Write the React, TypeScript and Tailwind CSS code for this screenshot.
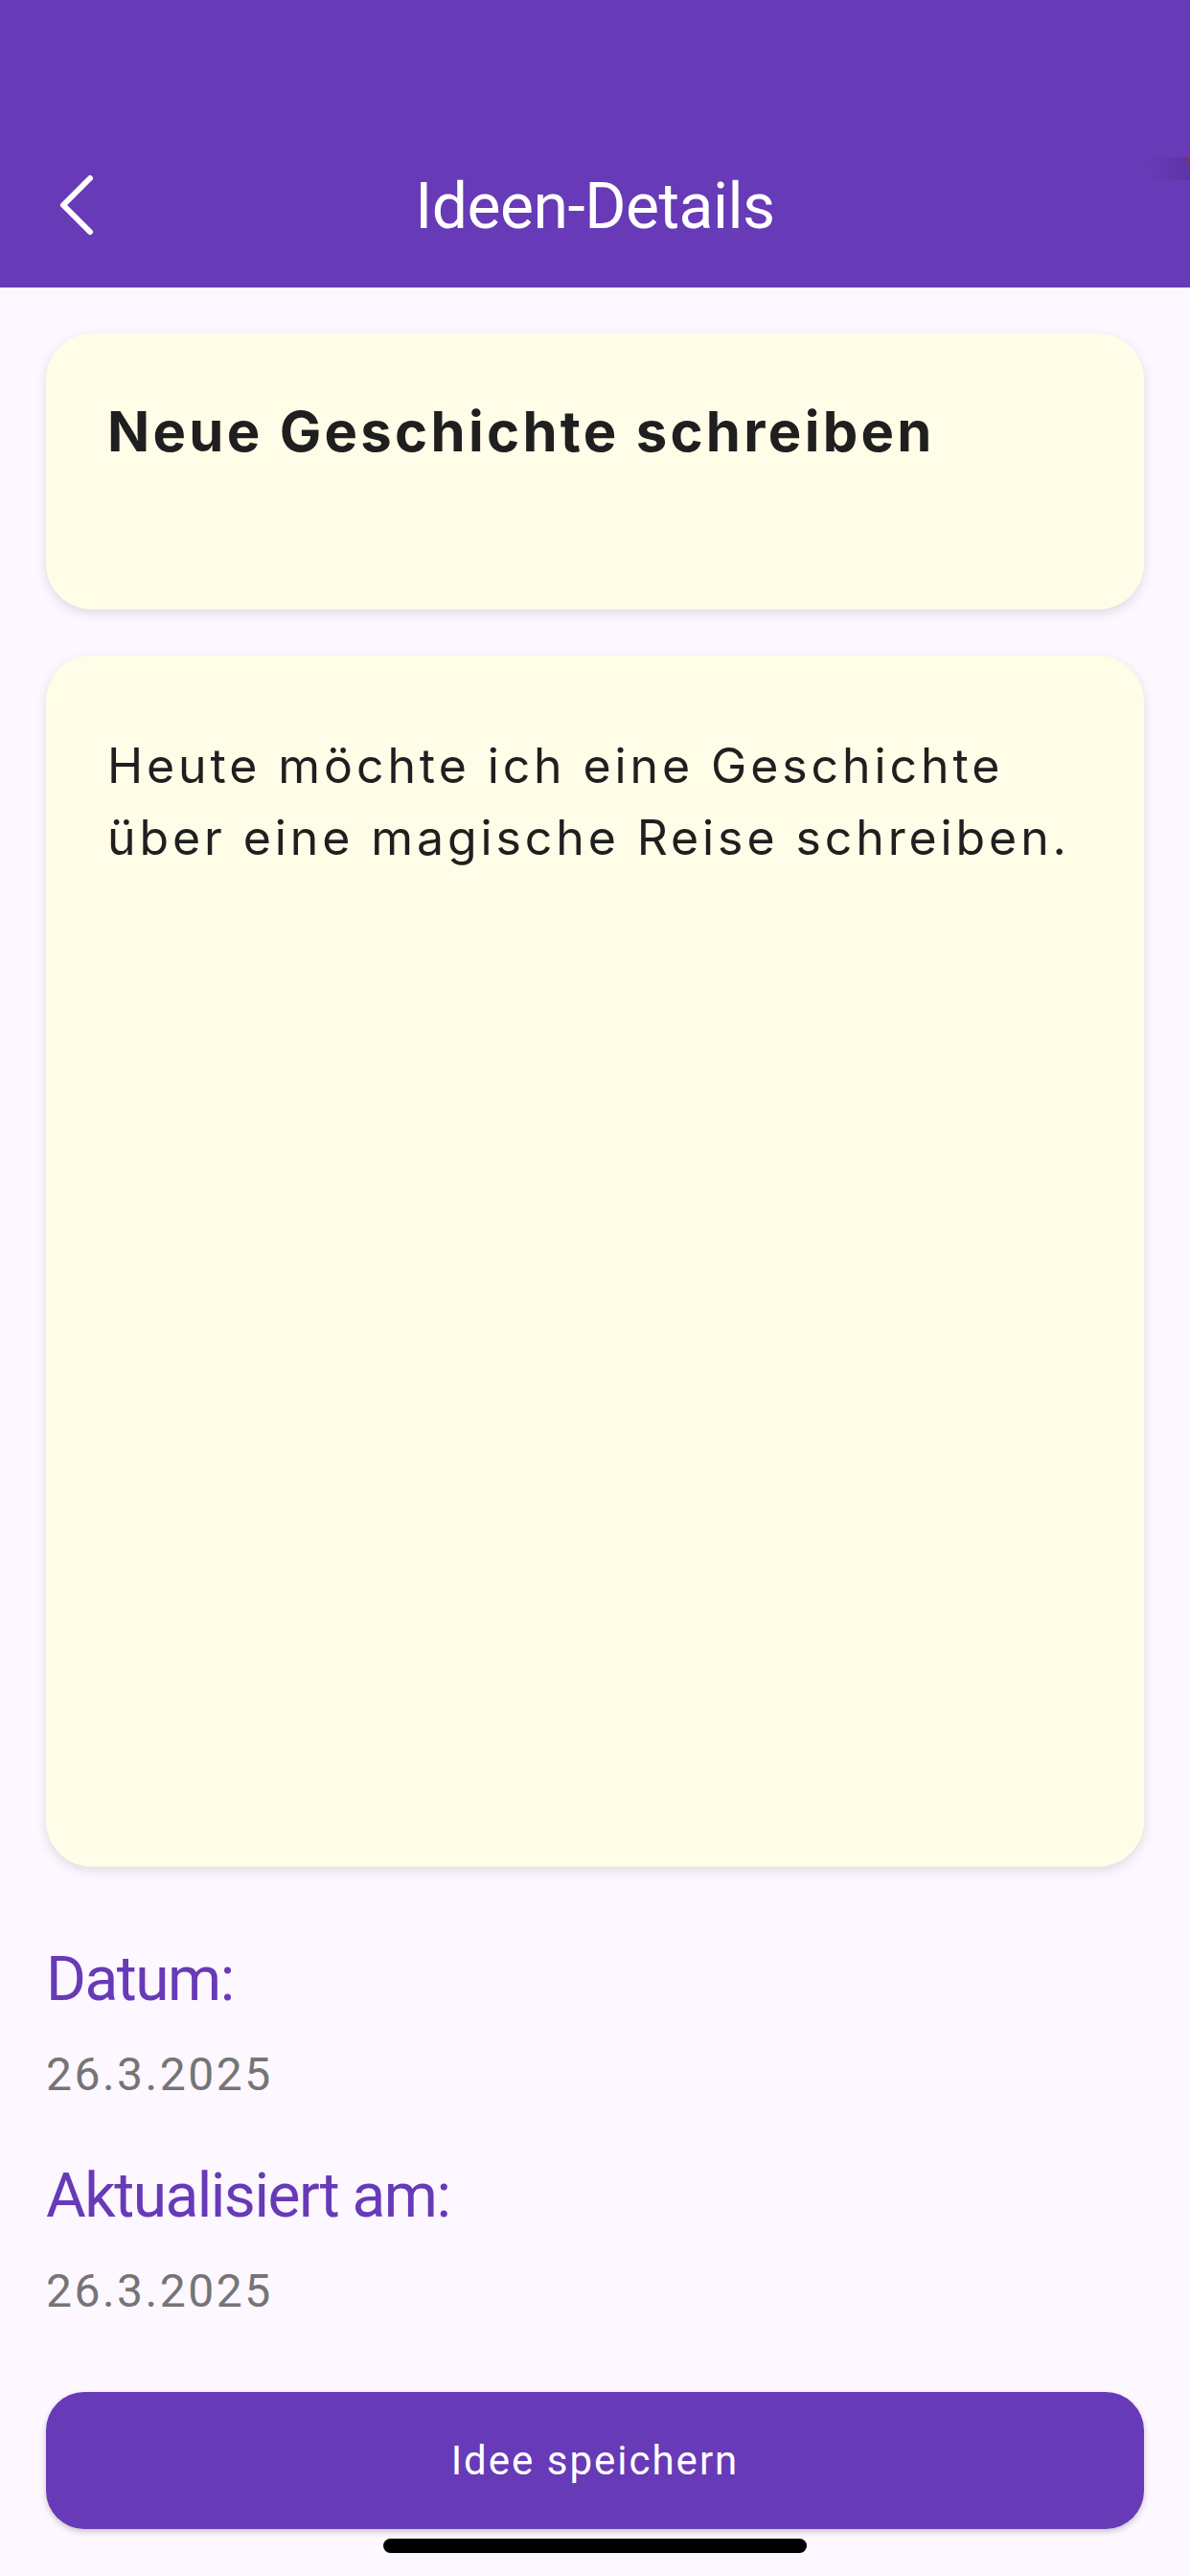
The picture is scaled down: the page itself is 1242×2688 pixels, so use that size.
import React from "react";

// Idea detail screen
const BackChevron: React.FC = () => (
  <svg width="48" height="72" viewBox="0 0 48 72" fill="none">
    <path
      d="M38 8 L10 36 L38 64"
      stroke="white"
      strokeWidth="6"
      strokeLinecap="round"
      strokeLinejoin="round"
    />
  </svg>
);

const Header: React.FC = () => (
  <div className="relative bg-[#673ab7] h-[300px] flex flex-col">
    <div className="h-[132px]" />
    <div className="relative h-[168px] flex items-center justify-center">
      <button className="absolute left-[56px] top-[46px]">
        <BackChevron />
      </button>
      <h1 className="text-white text-[66px] leading-[80px] font-['Roboto'] font-normal tracking-[-0.5px]">
        Ideen-Details
      </h1>
    </div>
    {/* debug banner remnant */}
    <div className="absolute right-0 top-[164px] w-[44px] h-[24px] bg-gradient-to-r from-transparent to-black/10" />
    <div className="absolute right-0 top-[164px] w-[3px] h-[4px] bg-[#b3261e]" />
  </div>
);

const InfoRow: React.FC<{ label: string; value: string; topGap: string }> = ({
  label,
  value,
  topGap,
}) => (
  <div className={topGap}>
    <div className="text-[#673ab7] text-[64px] leading-[76px] font-['Roboto'] tracking-[-1.5px]">
      {label}
    </div>
    <div className="mt-[33px] text-[#757575] text-[48px] leading-[56px] font-['Roboto'] tracking-[2.5px]">
      {value}
    </div>
  </div>
);

export default function App() {
  return (
    <div className="w-[1242px] h-[2688px] bg-[#fdf7ff] flex flex-col overflow-hidden font-['Roboto',sans-serif]">
      <Header />
      <div className="px-[48px] pt-[48px] flex flex-col">
        <div className="bg-[#fffde7] rounded-[48px] h-[288px] pl-[64px] pt-[66px] shadow-[0_4px_12px_rgba(0,0,0,0.12)]">
          <div className="text-[#1f1f1f] text-[58px] leading-[72px] font-bold tracking-[3.3px] font-['Inter']">
            Neue Geschichte schreiben
          </div>
        </div>
        <div className="mt-[48px] bg-[#fffde7] rounded-[48px] h-[1264px] pl-[64px] pr-[40px] pt-[78px] shadow-[0_4px_12px_rgba(0,0,0,0.12)]">
          <p className="text-[#1f1f1f] text-[50px] leading-[75px] tracking-[3.9px] font-['Inter'] whitespace-nowrap">
            Heute möchte ich eine Geschichte
            <br />
            über eine magische Reise schreiben.
          </p>
        </div>
        <InfoRow label="Datum:" value="26.3.2025" topGap="mt-[80px]" />
        <InfoRow label="Aktualisiert am:" value="26.3.2025" topGap="mt-[61px]" />
        <button className="mt-[77px] h-[143px] w-full rounded-[40px] bg-[#673ab7] text-white text-[42px] font-['Roboto'] font-normal tracking-[2px] shadow-[0_3px_6px_rgba(0,0,0,0.2)]">
          Idee speichern
        </button>
      </div>
      <div className="flex justify-center mt-[10px]">
        <div className="w-[442px] h-[15px] rounded-full bg-black" />
      </div>
    </div>
  );
}
